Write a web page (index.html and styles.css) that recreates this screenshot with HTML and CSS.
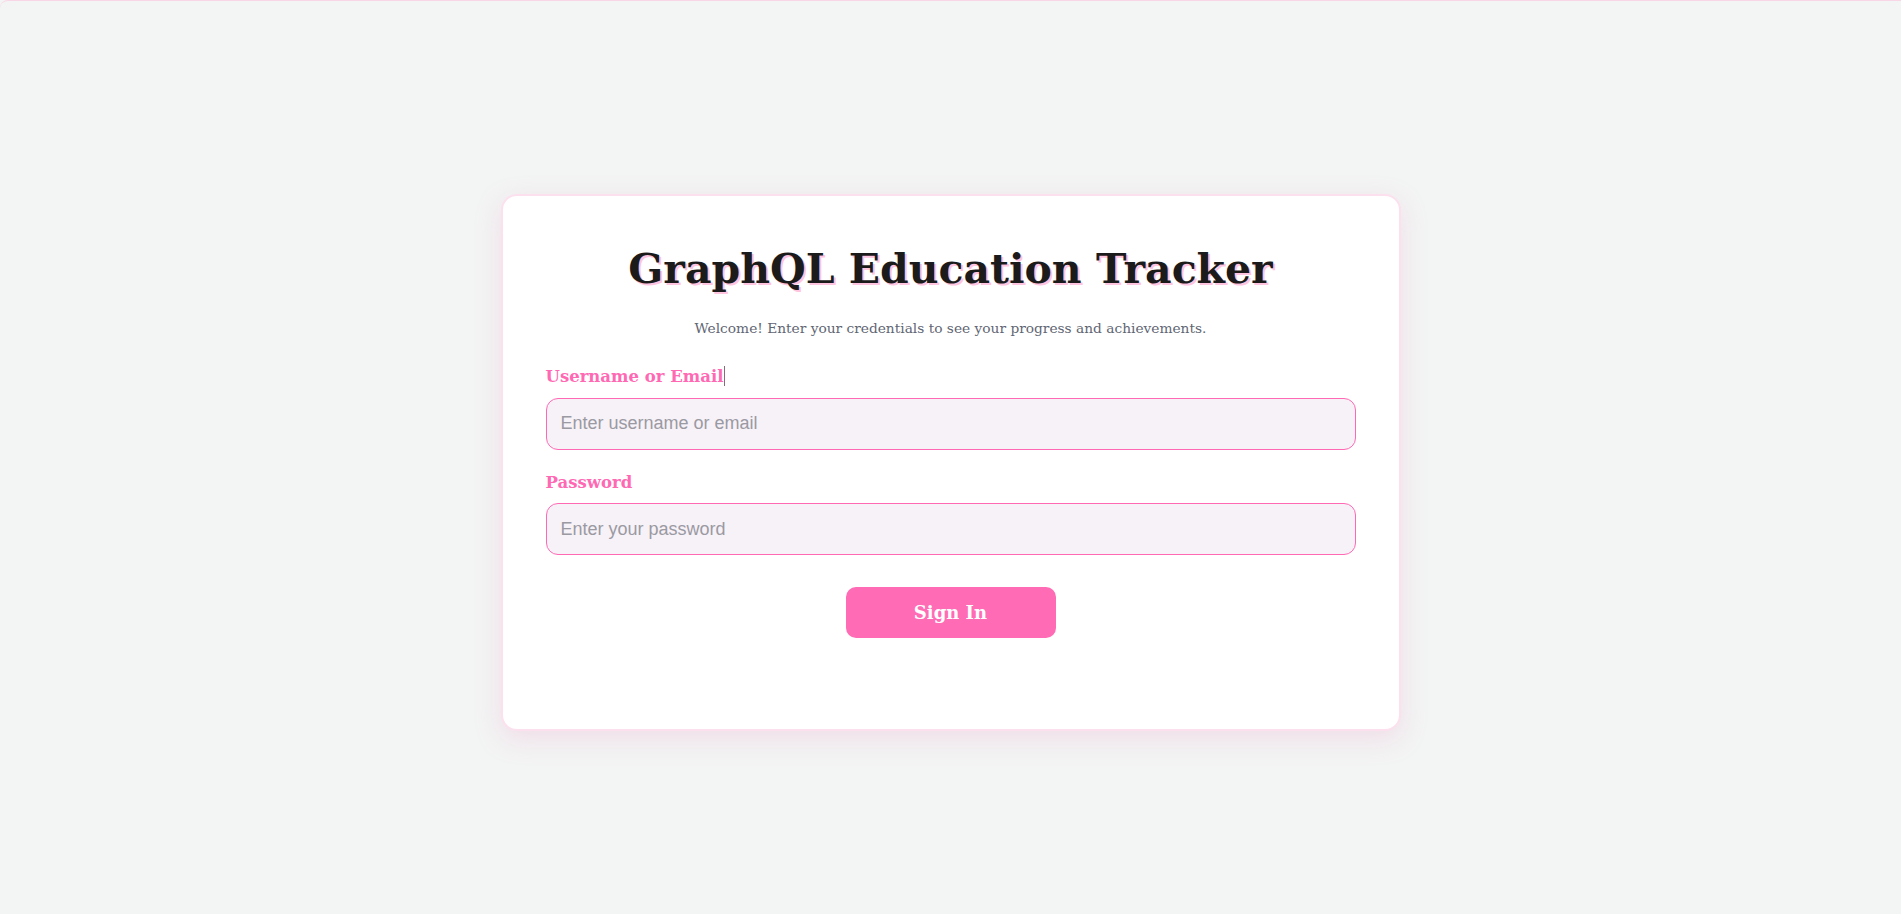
FILE: index.html
```html
<!DOCTYPE html>
<html lang="en">
<head>
<meta charset="utf-8">
<title>GraphQL Education Tracker</title>
<link rel="stylesheet" href="styles.css">
</head>
<body>
<div class="page">
  <main class="card">
    <h1 class="title">GraphQL Education Tracker</h1>
    <p class="subtitle">Welcome! Enter your credentials to see your progress and achievements.</p>
    <form class="form">
      <div class="field">
        <label class="label" for="user">Username or Email<span class="caret"></span></label>
        <input class="input" id="user" type="text" placeholder="Enter username or email">
      </div>
      <div class="field">
        <label class="label" for="pass">Password</label>
        <input class="input" id="pass" type="password" placeholder="Enter your password">
      </div>
      <div class="actions">
        <button class="button" type="button">Sign In</button>
      </div>
      <div class="message"></div>
    </form>
  </main>
</div>
</body>
</html>
```

FILE: styles.css
```css
* { box-sizing: border-box; }
html, body { margin: 0; padding: 0; }
body {
  background: #f3f4f4;
  font-family: "DejaVu Serif", Georgia, serif;
}
.page {
  min-height: 914px;
  display: flex;
  align-items: center;
  justify-content: center;
  border-top: 1px solid #f8d6e6;
  border-radius: 8px 0 0 0;
  padding-top: 10px;
}
.card {
  width: 900px;
  background: #ffffff;
  border: 2px solid #fce0ee;
  border-radius: 16px;
  box-shadow: 0 8px 24px rgba(236, 180, 210, 0.35);
  padding: 48px 43px 44px;
}
.title {
  margin: 0;
  text-align: center;
  font-size: 41px;
  font-weight: 700;
  color: #1c1b1b;
  text-shadow: 2px 2px 0 #ffc4df;
  line-height: 1.25;
}
.subtitle {
  margin: 25px 0 0;
  text-align: center;
  font-size: 13.75px;
  color: #5f6673;
}
.form {
  margin-top: 30px;
  display: flex;
  flex-direction: column;
}
.field {
  display: flex;
  flex-direction: column;
  margin-bottom: 23px;
}
.label {
  font-size: 16.5px;
  font-weight: 700;
  color: #ff69b4;
  margin-bottom: 11.5px;
  display: flex;
  align-items: center;
}
.caret {
  display: inline-block;
  width: 1px;
  height: 20px;
  background: #8a6a7a;
  margin-left: 1px;
}
.input {
  height: 52px;
  width: 100%;
  border: 1px solid #ff69b4;
  border-radius: 12px;
  background: #f7f1f8;
  padding: 0 14px;
  font-family: "Liberation Sans", Arial, sans-serif;
  font-size: 18px;
  color: #333;
  outline: none;
}
.input::placeholder { color: #9a9aa2; }
.actions {
  display: flex;
  justify-content: center;
  margin-top: 8.5px;
}
.button {
  width: 210px;
  height: 51px;
  border: none;
  border-radius: 10px;
  background: #ff6bb4;
  color: #ffffff;
  font-family: "DejaVu Serif", Georgia, serif;
  font-size: 18px;
  font-weight: 700;
  cursor: pointer;
}
.message {
  height: 47px;
}
```
